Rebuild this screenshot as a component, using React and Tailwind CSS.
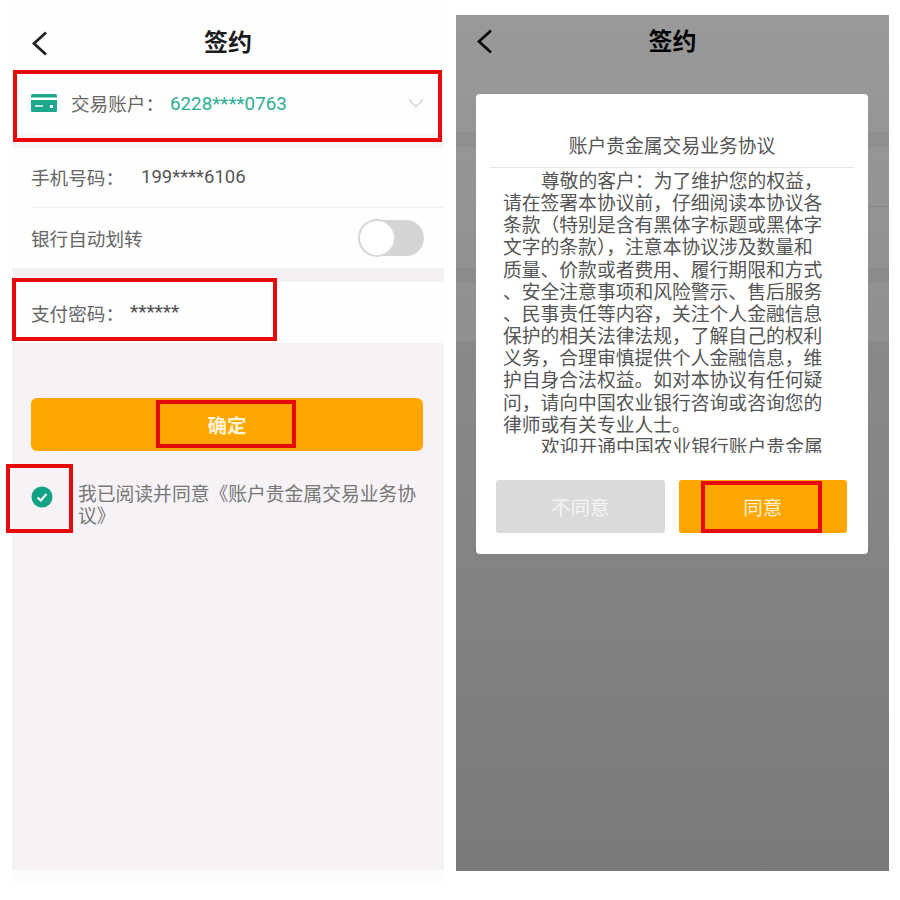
const cjk = "font-['Noto_Sans_CJK_SC','Noto_Sans',sans-serif]";
const num = "font-['Roboto','Noto_Sans_CJK_SC',sans-serif]";

const lines = [
  "请在签署本协议前，仔细阅读本协议各",
  "条款（特别是含有黑体字标题或黑体字",
  "文字的条款），注意本协议涉及数量和",
  "质量、价款或者费用、履行期限和方式",
  "、安全注意事项和风险警示、售后服务",
  "、民事责任等内容，关注个人金融信息",
  "保护的相关法律法规，了解自己的权利",
  "义务，合理审慎提供个人金融信息，维",
  "护自身合法权益。如对本协议有任何疑",
  "问，请向中国农业银行咨询或咨询您的",
  "律师或有关专业人士。",
];

function Back() {
  return (
    <svg width="18" height="27" viewBox="0 0 18 27" fill="none" className="shrink-0">
      <path d="M15 2.5 L3 13.5 L15 24.5" stroke="currentColor" strokeWidth="2.8" />
    </svg>
  );
}

function Mark({ className }) {
  return <div className={`absolute border-[4px] border-[#e60a0a] ${className}`} />;
}

function LeftPanel() {
  return (
    <div className="flex h-[884px] w-[432px] flex-col bg-[#fefefe]">
      <div className="h-[70px] pt-[24px]">
        <div className="relative flex items-center justify-center">
          <div className="absolute left-[19px] top-[6px] text-[#222]"><Back /></div>
          <span className="text-[24px] font-bold leading-[34px] text-[#1c1c1c]">签约</span>
        </div>
      </div>
      <div className="flex h-[63px] items-center pb-[1px] pl-[19px] pr-[20px] pt-[3px]">
        <svg width="26" height="18" viewBox="0 0 26 18" className="shrink-0">
          <rect width="26" height="18" rx="1.5" fill="#1fa98c" />
          <rect y="3.5" width="26" height="2.5" fill="#fff" />
          <rect x="4" y="11" width="8" height="2" fill="#bfe8dd" />
          <rect x="19" y="11" width="3" height="3" fill="#fff" />
        </svg>
        <span className="ml-[14px] w-[99px] whitespace-nowrap text-[18.6px] leading-[24px] text-[#666]">交易账户：</span>
        <span className={`${num} pt-[2px] text-[18.8px] leading-[24px] text-[#2bae94]`}>6228****0763</span>
        <svg width="16" height="10" viewBox="0 0 16 10" fill="none" className="ml-auto">
          <path d="M1 1.5 L8 8.5 L15 1.5" stroke="#d4d4d4" strokeWidth="1.5" />
        </svg>
      </div>
      <div className="h-[15px] bg-[#f7f5f7]" />
      <div className="ml-[19px] flex h-[60px] items-center border-b border-[#efefef] pb-[2px]">
        <span className="w-[110px] whitespace-nowrap text-[18.6px] text-[#666]">手机号码：</span>
        <span className={`${num} pt-[2px] text-[18.5px] text-[#555]`}>199****6106</span>
      </div>
      <div className="flex h-[60px] items-center justify-between pl-[19px] pr-[20px]">
        <span className="text-[18.6px] text-[#666]">银行自动划转</span>
        <div className="relative h-[36px] w-[66px] rounded-full bg-[#d4d4d4]">
          <div className="absolute left-0 top-[-1px] h-[38px] w-[38px] rounded-full border-2 border-[#d8d8d8] bg-white" />
        </div>
      </div>
      <div className="h-[14px] bg-[#f4f0f4]" />
      <div className="flex h-[61px] items-center pl-[19px] pt-[1px]">
        <span className="w-[99px] whitespace-nowrap text-[18.6px] text-[#666]">支付密码：</span>
        <span className={`${num} text-[18.5px] font-medium text-[#555]`}>******</span>
      </div>
      <div className="flex flex-1 flex-col bg-[#f6f2f6] pl-[19px] pr-[21px] pt-[55px]">
        <div className="flex h-[53px] items-center justify-center rounded-[6px] bg-[#ffa600] text-[19.5px] font-bold text-[#fff3d6]">确定</div>
        <div className="mt-[31px] flex items-start">
          <svg width="22" height="22" viewBox="0 0 22 22" className="mt-[4px] shrink-0">
            <circle cx="11" cy="11" r="10.5" fill="#12a182" />
            <path d="M6.5 11.5 L9.8 14.5 L15.5 8" stroke="#fff" strokeWidth="2" fill="none" />
          </svg>
          <div className="ml-[25px] w-[345px] whitespace-nowrap text-[18.8px] leading-[22px] text-[#777]">
            <div>我已阅读并同意《账户贵金属交易业务协</div>
            <div>议》</div>
          </div>
        </div>
      </div>
      <div className="h-[14px] bg-[#fdfcfa]" />
    </div>
  );
}

function RightPanel() {
  return (
    <div className="relative mt-[15px] flex h-[856px] w-[433px] flex-col overflow-hidden bg-[#f6f2f6]">
      <div className="h-[117px] bg-white pt-[8px]">
        <div className="relative flex items-center justify-center">
          <div className="absolute left-[20px] top-[5px] text-[#111]"><Back /></div>
          <span className="text-[24px] font-bold leading-[34px] text-black">签约</span>
        </div>
      </div>
      <div className="h-[15px]" />
      <div className="h-[60px] bg-white">
        <div className="ml-[19px] h-full border-b border-[#e8e8e8]" />
      </div>
      <div className="h-[61px] bg-white" />
      <div className="h-[14px]" />
      <div className="h-[61px] border-b border-[#eeeeee] bg-white" />
      <div className="absolute inset-0 bg-gradient-to-b from-black/40 to-black/50" />
      <div className="absolute left-[20px] top-[79px] flex h-[460px] w-[392px] flex-col rounded-[4px] bg-white">
        <div className="mx-[14px] border-b border-[#e6e6e6] pb-[10px] pt-[39px] text-center text-[18.8px] leading-[24px] text-[#555]">
          账户贵金属交易业务协议
        </div>
        <div className="h-[285px] overflow-hidden pl-[27px] pt-[1px] text-[18.8px] leading-[22.15px] text-[#555] whitespace-nowrap">
          <div className="pl-[38px]">尊敬的客户：为了维护您的权益，</div>
          {lines.map((t) => (
            <div key={t}>{t}</div>
          ))}
          <div className="pl-[38px]">欢迎开通中国农业银行账户贵金属</div>
        </div>
        <div className="mt-[27px] flex gap-[14px] pl-[20px] pr-[21px]">
          <div className="flex h-[53px] flex-1 items-center justify-center rounded-[3px] bg-[#dadada] pt-[1px] text-[19.5px] text-[#f4f4f4]">不同意</div>
          <div className="flex h-[53px] flex-1 items-center justify-center rounded-[3px] bg-[#ffa600] pt-[1px] text-[19.5px] text-[#fff3d6]">同意</div>
        </div>
      </div>
    </div>
  );
}

export default function App() {
  return (
    <div className={`relative flex h-[900px] w-[900px] items-start gap-[12px] overflow-hidden bg-white pl-[12px] ${cjk}`}>
      <LeftPanel />
      <RightPanel />
      <Mark className="left-[13px] top-[70px] h-[72px] w-[429px]" />
      <Mark className="left-[12px] top-[278px] h-[63px] w-[265px]" />
      <Mark className="left-[156px] top-[400px] h-[48px] w-[140px]" />
      <Mark className="left-[6px] top-[464px] h-[69px] w-[67px]" />
      <Mark className="left-[701px] top-[481px] h-[52px] w-[121px]" />
    </div>
  );
}
